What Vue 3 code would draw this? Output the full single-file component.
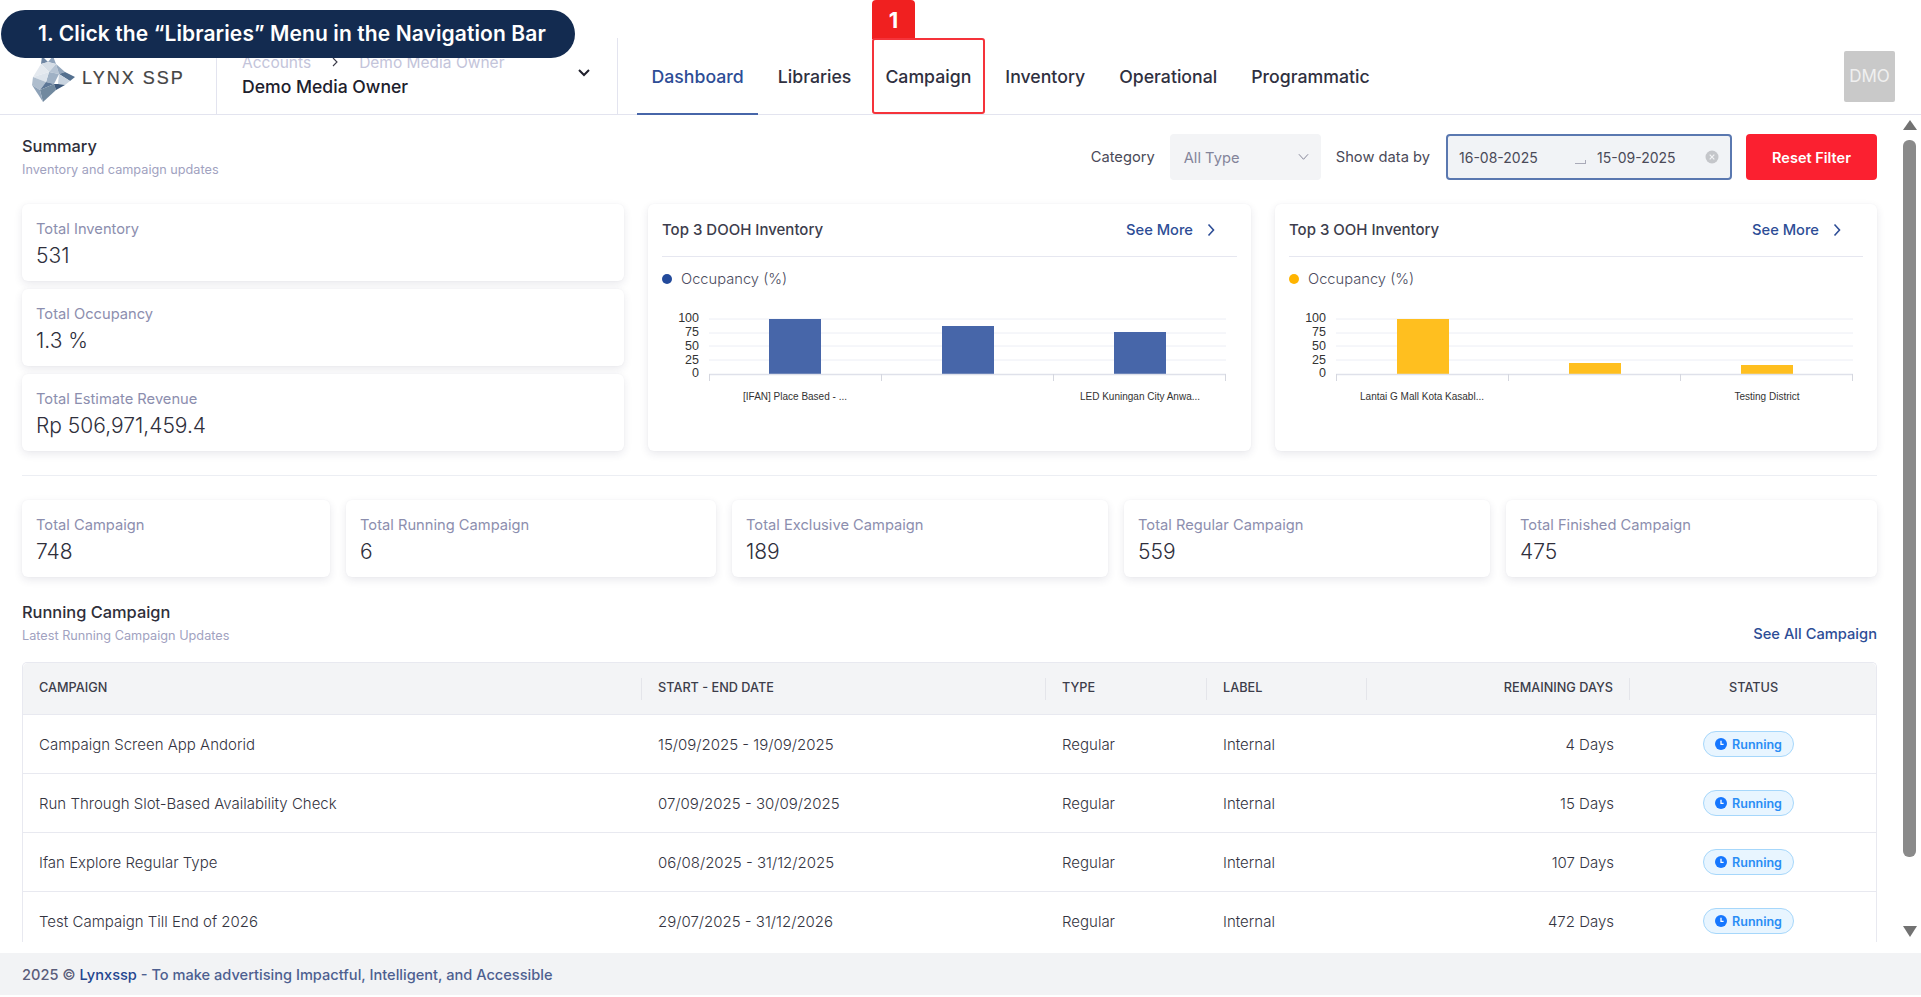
<script setup>
const nav = ['Dashboard', 'Libraries', 'Campaign', 'Inventory', 'Operational', 'Programmatic']
const sideCards = [
  ['Total Inventory', '531'],
  ['Total Occupancy', '1.3 %'],
  ['Total Estimate Revenue', 'Rp 506,971,459.4'],
]
const statCards = [
  ['Total Campaign', '748'],
  ['Total Running Campaign', '6'],
  ['Total Exclusive Campaign', '189'],
  ['Total Regular Campaign', '559'],
  ['Total Finished Campaign', '475'],
]
const charts = [
  {
    title: 'Top 3 DOOH Inventory', dot: '#234a9b', fill: '#4766a9',
    bars: [[107, 0], [280, 7], [452, 13]],
    labels: [[133, '[IFAN] Place Based - ...'], [478, 'LED Kuningan City Anwa...']],
  },
  {
    title: 'Top 3 OOH Inventory', dot: '#ffb400', fill: '#ffbf1f',
    bars: [[108, 0], [280, 44], [452, 46]],
    labels: [[133, 'Lantai G Mall Kota Kasabl...'], [478, 'Testing District']],
  },
]
const gridY = [9, 23, 36, 50]
const ticks = [['100', 8], ['75', 22], ['50', 36], ['25', 50], ['0', 63]]
const columns = ['Campaign', 'Start - End Date', 'Type', 'Label', 'Remaining Days', 'Status']
const rows = [
  ['Campaign Screen App Andorid', '15/09/2025 - 19/09/2025', '4 Days'],
  ['Run Through Slot-Based Availability Check', '07/09/2025 - 30/09/2025', '15 Days'],
  ['Ifan Explore Regular Type', '06/08/2025 - 31/12/2025', '107 Days'],
  ['Test Campaign Till End of 2026', '29/07/2025 - 31/12/2026', '472 Days'],
]
</script>

<template>
  <div class="page">
    <div class="tip">1. Click the “Libraries” Menu in the Navigation Bar</div>
    <div class="top-gap"></div>
    <header class="header">
      <div class="brand">
        <svg class="lynx" viewBox="0 0 44 48" aria-hidden="true">
          <polygon points="10,2 16,8 9,10" fill="#6f86a3" />
          <polygon points="21,2 24,10 16,8" fill="#8fa3bb" />
          <polygon points="9,10 16,8 24,10 17,18" fill="#d5dde6" />
          <polygon points="9,10 17,18 1,23" fill="#e4e9ef" />
          <polygon points="24,10 27,20 17,18" fill="#b5c3d3" />
          <polygon points="24,10 33,18 27,20" fill="#93a6bc" />
          <polygon points="33,18 43,23 38,27 27,20" fill="#54708f" />
          <polygon points="27,20 38,27 33,31 26,30" fill="#c9d4e0" />
          <polygon points="17,18 27,20 22,30 14,28" fill="#9fb1c5" />
          <polygon points="1,23 17,18 14,28" fill="#dde4ec" />
          <polygon points="1,23 14,28 8,36 0,31" fill="#aebdcd" />
          <polygon points="14,28 22,30 8,36" fill="#5c7696" />
          <polygon points="8,36 22,30 24,36 11,48" fill="#71899f" />
          <polygon points="0,31 8,36 11,48" fill="#8ea2b8" />
          <polygon points="22,30 26,30 33,31 24,36" fill="#3f5a7c" />
        </svg>
        <span class="brand-name">LYNX SSP</span>
      </div>
      <div class="account">
        <div class="account-text">
          <div class="crumbs">
            <span>Accounts</span>
            <svg class="crumb-sep" viewBox="0 0 8 10"><path d="M2 1l4 4-4 4" /></svg>
            <span>Demo Media Owner</span>
          </div>
          <div class="account-name">Demo Media Owner</div>
        </div>
        <svg class="account-caret" viewBox="0 0 14 10"><path d="M2 2l5 5 5-5" /></svg>
      </div>
      <nav class="nav">
        <div v-for="item in nav" :key="item" class="nav-item" :class="{ active: item === 'Dashboard' }">
          {{ item }}
          <template v-if="item === 'Campaign'">
            <span class="hl-badge">1</span>
            <span class="hl-box"></span>
          </template>
        </div>
      </nav>
      <div class="avatar">DMO</div>
    </header>

    <div class="body">
      <main class="content">
        <section class="summary-head">
          <div>
            <div class="sec-title">Summary</div>
            <div class="sec-sub">Inventory and campaign updates</div>
          </div>
          <div class="filters">
            <span class="filter-label">Category</span>
            <div class="select">
              <span class="select-value">All Type</span>
              <svg viewBox="0 0 12 8"><path d="M1 1l5 5.5L11 1" /></svg>
            </div>
            <span class="filter-label show-by">Show data by</span>
            <div class="range">
              <span class="date">16-08-2025</span>
              <span class="range-arrow"></span>
              <span class="date">15-09-2025</span>
              <svg class="clear" viewBox="0 0 14 14">
                <circle cx="7" cy="7" r="6.5" fill="#c4c6ca" />
                <path d="M4.7 4.7l4.6 4.6M9.3 4.7l-4.6 4.6" stroke="#f2f3f5" stroke-width="1.2" />
              </svg>
            </div>
            <button class="reset">Reset Filter</button>
          </div>
        </section>

        <section class="overview">
          <div class="side-stack">
            <div v-for="c in sideCards" :key="c[0]" class="card stat">
              <div class="stat-label">{{ c[0] }}</div>
              <div class="stat-value">{{ c[1] }}</div>
            </div>
          </div>
          <div v-for="chart in charts" :key="chart.title" class="card chart-card">
            <div class="chart-head">
              <span class="chart-title">{{ chart.title }}</span>
              <span class="see-more">See More
                <svg viewBox="0 0 8 14"><path d="M1.5 1.5L6.5 7l-5 5.5" /></svg>
              </span>
            </div>
            <div class="legend">
              <i class="dot" :style="{ background: chart.dot }"></i>
              <span>Occupancy (%)</span>
            </div>
            <svg class="chart" viewBox="0 0 575 100" width="575" height="100">
              <line v-for="y in gridY" :key="y" x1="47" x2="564" :y1="y" :y2="y" stroke="#eceef5" />
              <rect
                v-for="b in chart.bars" :key="b[0]"
                :x="b[0]" :y="9 + b[1]" width="52" :height="55 - b[1]" :fill="chart.fill"
              />
              <line x1="47" x2="564" y1="64.5" y2="64.5" stroke="#dfe1ea" stroke-width="1.5" />
              <path d="M47.5 64v7M219.5 64v7M391.5 64v7M563.5 64v7" stroke="#d5d7df" fill="none" />
              <text v-for="t in ticks" :key="t[0]" x="37" :y="t[1] + 4" text-anchor="end" class="tick">{{ t[0] }}</text>
              <text v-for="l in chart.labels" :key="l[1]" :x="l[0]" y="90" text-anchor="middle" class="cat">{{ l[1] }}</text>
            </svg>
          </div>
        </section>

        <hr class="rule" />

        <section class="stat-row">
          <div v-for="c in statCards" :key="c[0]" class="card stat">
            <div class="stat-label">{{ c[0] }}</div>
            <div class="stat-value">{{ c[1] }}</div>
          </div>
        </section>

        <section class="running-head">
          <div>
            <div class="sec-title">Running Campaign</div>
            <div class="sec-sub">Latest Running Campaign Updates</div>
          </div>
          <span class="see-all">See All Campaign</span>
        </section>

        <section class="table">
          <div class="tr th-row">
            <div v-for="c in columns" :key="c" class="th">{{ c }}</div>
          </div>
          <div v-for="r in rows" :key="r[0]" class="tr">
            <div class="td">{{ r[0] }}</div>
            <div class="td">{{ r[1] }}</div>
            <div class="td">Regular</div>
            <div class="td">Internal</div>
            <div class="td right">{{ r[2] }}</div>
            <div class="td center">
              <span class="status">
                <svg viewBox="0 0 12 12">
                  <circle cx="6" cy="6" r="6" fill="#1677ff" />
                  <path d="M6 2.8V6.3h2.6" stroke="#fff" stroke-width="1.3" fill="none" />
                </svg>
                Running
              </span>
            </div>
          </div>
        </section>
      </main>
      <div class="scrollbar">
        <i class="arrow up"></i>
        <i class="thumb"></i>
        <i class="arrow down"></i>
      </div>
    </div>

    <footer class="footer">
      <span class="f-grey">2025 ©</span>&nbsp;<span class="f-brand">Lynxssp</span><span class="f-rest">&nbsp;- To make advertising Impactful, Intelligent, and Accessible</span>
    </footer>
  </div>
</template>

<style>
html, body { margin: 0; height: 100%; overflow: hidden; background: #fff; }
</style>

<style scoped>
.page {
  position: relative;
  display: flex;
  flex-direction: column;
  height: 997px;
  padding-bottom: 2px;
  box-sizing: border-box;
  overflow: hidden;
  font-family: Inter, "Noto Sans", sans-serif;
  color: #3a3a48;
  background: #fff;
}
.tip {
  position: absolute;
  z-index: 5;
  left: 1px;
  top: 10px;
  width: 574px;
  height: 48px;
  line-height: 47px;
  box-sizing: border-box;
  padding-left: 37px;
  border-radius: 24px;
  background: #132b50;
  color: #fff;
  font-size: 21px;
  font-weight: 600;
  letter-spacing: 0.1px;
  white-space: nowrap;
}
.top-gap { height: 38px; flex: none; }
.header {
  flex: none;
  display: flex;
  align-items: stretch;
  height: 76px;
  box-sizing: content-box;
  border-bottom: 1px solid #e3e4ef;
}
.brand {
  width: 217px;
  flex: none;
  display: flex;
  align-items: center;
  gap: 6px;
  padding-left: 32px;
  box-sizing: border-box;
  border-right: 1px solid #e3e4ef;
}
.lynx { width: 44px; height: 48px; margin-top: 4px; flex: none; }
.brand-name {
  position: relative;
  top: 2px;
  font-family: "Liberation Sans", sans-serif;
  font-size: 18px;
  letter-spacing: 2px;
  -webkit-text-stroke: 0.2px #444;
  color: #444;
  white-space: nowrap;
}
.account {
  width: 401px;
  flex: none;
  display: flex;
  align-items: flex-start;
  justify-content: space-between;
  padding: 17px 26px 0 25px;
  box-sizing: border-box;
  border-right: 1px solid #e3e4ef;
}
.crumbs {
  display: flex;
  align-items: center;
  gap: 20px;
  font-size: 15.5px;
  line-height: 16px;
  color: #c3c4da;
}
.crumb-sep { width: 8px; height: 10px; margin-top: -3px; }
.crumb-sep path { fill: none; stroke: #3a3a48; stroke-width: 1.1; }
.account-name {
  margin-top: 5px;
  font-size: 17.6px;
  font-weight: 500;
  line-height: 22px;
  color: #20202c;
}
.account-caret { width: 14px; height: 10px; margin: 13px 0 0; }
.account-caret path { fill: none; stroke: #20202c; stroke-width: 2; }
.nav { display: flex; flex: 1; padding-left: 16.5px; }
.nav-item {
  position: relative;
  display: flex;
  align-items: center;
  padding: 0 17px;
  font-size: 17.7px;
  font-weight: 500;
  color: #2f3040;
}
.nav-item.active { color: #2d4d96; }
.nav-item.active::after {
  content: "";
  position: absolute;
  left: 2px;
  right: 3px;
  bottom: -1px;
  height: 2px;
  background: #4766a9;
}
.hl-box {
  position: absolute;
  left: 3.5px;
  right: 3.5px;
  top: 0;
  bottom: 0;
  border: 2px solid #f5333a;
  border-radius: 3px;
  box-sizing: border-box;
}
.hl-badge {
  position: absolute;
  left: 3.5px;
  top: -38px;
  width: 43px;
  height: 39px;
  border-radius: 4px 4px 0 0;
  background: #f02020;
  color: #fff;
  font-size: 22px;
  font-weight: 700;
  line-height: 40px;
  text-align: center;
}
.avatar {
  align-self: flex-start;
  width: 51px;
  height: 51px;
  margin: 13px 26px 0 0;
  border-radius: 2px;
  background: #c9c9c9;
  color: #f0f0f0;
  font-size: 17px;
  line-height: 51px;
  text-align: center;
}
.body {
  flex: 1;
  min-height: 0;
  display: flex;
  margin-bottom: 11px;
}
.content {
  flex: 1;
  min-width: 0;
  overflow: hidden;
  padding: 19px 23px 0 22px;
}
.scrollbar {
  width: 21px;
  flex: none;
  display: flex;
  flex-direction: column;
  padding: 5px 5px 5px 3px;
  box-sizing: border-box;
}
.thumb {
  display: block;
  width: 13px;
  height: 717px;
  margin-top: 10px;
  border-radius: 6px;
  background: #8a8a8a;
}
.arrow {
  display: block;
  width: 0;
  height: 0;
  border-left: 7px solid transparent;
  border-right: 7px solid transparent;
}
.arrow.up { border-bottom: 10px solid #727272; }
.arrow.down { border-top: 11px solid #727272; margin-top: 69px; }

.summary-head { display: flex; justify-content: space-between; height: 46px; }
.sec-title { margin-top: 2px; font-size: 16.4px; font-weight: 500; line-height: 20px; color: #2f2f3a; }
.sec-sub { margin-top: 6px; font-size: 12.7px; line-height: 16px; color: #a1a2bf; }
.filters { display: flex; align-items: stretch; }
.filter-label { align-self: center; font-size: 14.7px; color: #4a4a58; }
.select {
  width: 151px;
  margin-left: 15px;
  padding: 0 12px 0 14px;
  box-sizing: border-box;
  display: flex;
  align-items: center;
  justify-content: space-between;
  border-radius: 4px;
  background: #f3f4f6;
  font-size: 14.7px;
  color: #83849a;
}
.select-value { padding-top: 2px; }
.select svg { width: 11px; height: 8px; }
.select path { fill: none; stroke: #7c7d90; stroke-width: 1; }
.show-by { margin-left: 15px; }
.range {
  width: 286px;
  margin-left: 16px;
  padding: 0 11px;
  box-sizing: border-box;
  display: flex;
  align-items: center;
  border: 2px solid #5a78b0;
  border-radius: 4px;
  background: #f1f3f6;
  font-size: 14px;
  color: #4a4a58;
}
.date { width: 86px; white-space: nowrap; }
.range-arrow {
  width: 10px;
  height: 3px;
  margin: 10px 11px 0 30px;
  border-bottom: 1px solid #a9aab8;
  border-right: 1px solid #a9aab8;
}
.clear { width: 14px; height: 14px; margin-left: auto; }
.reset {
  width: 131px;
  margin-left: 14px;
  border: 0;
  border-radius: 4px;
  background: #fb2030;
  color: #fff;
  font-family: inherit;
  font-size: 14.5px;
  font-weight: 600;
}

.overview {
  display: grid;
  grid-template-columns: 602px 603px 602px;
  gap: 24px;
  margin-top: 24px;
  height: 247px;
}
.card {
  background: #fff;
  border-radius: 6px;
  box-shadow: 0 3px 8px rgba(40, 44, 80, 0.1), 0 0 2px rgba(40, 44, 80, 0.04);
}
.side-stack { display: flex; flex-direction: column; gap: 8px; }
.stat { height: 77px; padding: 15px 14px 0; box-sizing: border-box; }
.stat-label { font-size: 14.7px; line-height: 20px; color: #8c8eae; }
.stat-value { margin-top: 3px; font-size: 21px; font-weight: 300; line-height: 27px; color: #2f2f3c; white-space: nowrap; }
.chart-card { padding: 0 14px; }
.chart-head {
  display: flex;
  justify-content: space-between;
  height: 53px;
  line-height: 52px;
  border-bottom: 1px solid #e6e7f0;
  box-sizing: border-box;
}
.chart-title { font-size: 15px; font-weight: 500; color: #3c3d4c; }
.see-more {
  display: flex;
  align-items: center;
  gap: 14px;
  padding-right: 22px;
  font-size: 14.7px;
  font-weight: 500;
  color: #2d4d96;
}
.see-more svg { width: 8px; height: 14px; }
.see-more path { fill: none; stroke: #2d4d96; stroke-width: 1.6; }
.legend {
  display: flex;
  align-items: center;
  gap: 9px;
  margin-top: 12px;
  height: 20px;
  font-size: 14.7px;
  font-weight: 300;
  color: #4b4c60;
}
.dot { width: 10px; height: 10px; border-radius: 50%; }
.chart { display: block; margin-top: 21px; }
.tick { font-family: "Liberation Sans", sans-serif; font-size: 12.5px; fill: #333; }
.cat { font-family: "Liberation Sans", sans-serif; font-size: 10px; fill: #333; }

.rule { height: 1px; margin: 24px 0; border: 0; background: #eceef3; }
.stat-row {
  display: grid;
  grid-template-columns: 308fr 370fr 376fr 366fr 371fr;
  gap: 16px;
}
.running-head {
  display: flex;
  justify-content: space-between;
  align-items: flex-end;
  height: 85px;
  padding-top: 25px;
  box-sizing: border-box;
}
.running-head .sec-title { margin-top: 0; }
.running-head > div { align-self: flex-start; }
.see-all { margin-bottom: 19px; font-size: 14.7px; font-weight: 500; color: #2d4d96; }
.table {
  border: 1px solid #e8e9f0;
  border-radius: 5px 5px 0 0;
  border-bottom: 0;
  width: 1855px;
  box-sizing: border-box;
}
.tr {
  display: grid;
  grid-template-columns: 619px 404px 161px 160px 263px 1fr;
  height: 59px;
  align-items: center;
  border-top: 1px solid #e8e9f0;
  box-sizing: border-box;
  font-size: 15px;
  font-weight: 300;
  color: #34343f;
}
.th-row {
  height: 51px;
  border-top: 0;
  background: #f3f4f6;
  border-radius: 5px 5px 0 0;
}
.th {
  height: 22px;
  line-height: 20px;
  padding-left: 16px;
  border-right: 1px solid #e4e5ea;
  box-sizing: border-box;
  font-size: 12.7px;
  font-weight: 500;
  text-transform: uppercase;
  color: #3c3d4a;
  white-space: nowrap;
}
.th:nth-child(5) { text-align: right; padding-right: 16px; }
.th:nth-child(6) { padding-left: 99px; border-right: 0; }
.td { padding-left: 16px; white-space: nowrap; }
.td.right { text-align: right; padding-right: 16px; }
.td.center { padding-left: 73px; }
.status {
  display: inline-flex;
  align-items: center;
  justify-content: center;
  gap: 5px;
  width: 91px;
  height: 26px;
  box-sizing: border-box;
  border: 1px solid #a6d7fb;
  border-radius: 13px;
  background: #e8f5ff;
  color: #2a8df5;
  font-size: 12.5px;
  font-weight: 600;
}
.status svg { width: 12px; height: 12px; }
.footer {
  flex: none;
  height: 42px;
  display: flex;
  align-items: center;
  padding: 1px 0 0 22px;
  box-sizing: border-box;
  background: #f2f3f5;
  font-size: 14.6px;
  font-weight: 500;
}
.f-grey { color: #5a5d7a; }
.f-brand { color: #23458f; }
.f-rest { color: #4d5f90; }
</style>
